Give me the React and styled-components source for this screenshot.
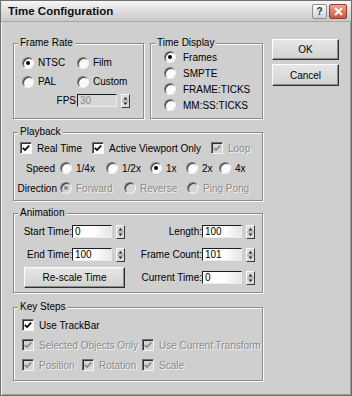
import React from 'react'
import styled, { createGlobalStyle } from 'styled-components';

const GlobalStyle = createGlobalStyle`
  html, body {
    margin: 0;
    padding: 0;
    background: #cfcfcf;
  }
  body {
    font-family: "Liberation Sans", Arial, sans-serif;
    font-size: 10px;
    color: #000;
  }
  * {
    box-sizing: border-box;
  }
`

const Window = styled.div`
  width: 352px;
  height: 396px;
  background: #cfcfcf;
  border: 1px solid #6e6e6e;
  box-shadow: inset 1px 1px 0 #f4f4f4, inset -1px -1px 0 #9a9a9a;
  display: flex;
  flex-direction: column;
  overflow: hidden;
`

const TitleBar = styled.div`
  height: 21px;
  flex: none;
  display: flex;
  align-items: center;
  padding: 0 4px 0 7px;
  background: linear-gradient(#f6f6f6, #dcdcdc 55%, #c8c8c8);
  border-bottom: 1px solid #a8a8a8;
`

const Title = styled.div`
  font-size: 11.5px;
  font-weight: bold;
  color: #111;
`

const TitleButtons = styled.div`
  margin-left: auto;
  display: flex;
  gap: 2px;
`

const HelpButton = styled.div`
  width: 15px;
  height: 15px;
  border: 1px solid #8c909a;
  border-radius: 2px;
  background: linear-gradient(#fafbfd, #cdd1da);
  display: flex;
  align-items: center;
  justify-content: center;
  font-size: 10px;
  font-weight: bold;
  color: #333;
`

const CloseButton = styled.div`
  width: 18px;
  height: 15px;
  border: 1px solid #9b3a2c;
  border-radius: 2px;
  background: linear-gradient(#eea193, #cf5541);
  display: flex;
  align-items: center;
  justify-content: center;
`

const Body = styled.div`
  padding: 15px 0 0 12px;
  display: flex;
  flex-direction: column;
`

const TopRow = styled.div`
  display: flex;
  align-items: flex-start;
`

const Group = styled.fieldset`
  margin: ${p => p.$mt || 0}px ${p => p.$mr || 0}px 0 0;
  padding: 0;
  min-width: 0;
  width: ${p => p.$w}px;
  border: 1px solid #8a8a8a;
  box-shadow: 1px 1px 0 #fafafa, inset 1px 1px 0 #fafafa;
`

const Legend = styled.legend`
  margin-left: 4px;
  padding: 0 2px;
  line-height: 12px;
  background: #cfcfcf;
`

const FrameRateBody = styled.div`
  height: 69px;
  padding: 4px 0 0 8px;
  display: grid;
  grid-template-columns: 55px auto;
  grid-auto-rows: 19px;
  align-items: center;
`

const TimeDisplayBody = styled.div`
  height: 69px;
  padding: 0 0 0 13px;
  display: grid;
  grid-auto-rows: 16px;
  align-items: center;
`

const FieldLabel = styled.div`
  display: flex;
  justify-content: flex-end;
  white-space: nowrap;
  padding-right: ${p => p.$pr || 0}px;
`

const ButtonColumn = styled.div`
  margin: 2px 0 0 9px;
  display: flex;
  flex-direction: column;
  gap: 4px;
`

const Button = styled.button`
  font: inherit;
  color: #000;
  width: ${p => p.$w}px;
  height: ${p => p.$h}px;
  margin-left: ${p => p.$ml || 0}px;
  padding: 0;
  background: linear-gradient(#e6e6e6, #d2d2d2);
  border: 1px solid;
  border-color: #fdfdfd #303030 #303030 #fdfdfd;
  box-shadow: inset -1px -1px 0 #8c8c8c;
`

const PlaybackBody = styled.div`
  padding: 0 0 2px 6px;
`

const Row = styled.div`
  height: 20px;
  display: grid;
  grid-template-columns: ${p => p.$cols};
  align-items: center;
`

const Option = styled.label`
  display: flex;
  align-items: center;
  gap: ${p => p.$gap || 4}px;
  white-space: nowrap;
  color: ${p => p.$disabled ? '#8c8c8c' : '#000'};
  text-shadow: ${p => p.$disabled ? '1px 1px 0 #f4f4f4' : 'none'};
  grid-column: ${p => p.$span ? `span ${p.$span}` : 'auto'};
`

const RadioCircle = styled.span`
  width: 12px;
  height: 12px;
  flex: none;
  border-radius: 50%;
  background: ${p => p.$disabled ? '#d6d6d6' : '#fbfbfb'};
  border: 1px solid;
  border-color: #7a7a7a #f2f2f2 #f2f2f2 #7a7a7a;
  box-shadow: inset 1px 1px 0 #3a3a3a;
  display: flex;
  align-items: center;
  justify-content: center;
  &::after {
    content: '';
    display: ${p => p.$on ? 'block' : 'none'};
    width: 4px;
    height: 4px;
    border-radius: 50%;
    background: ${p => p.$disabled ? '#8a8a8a' : '#000'};
    text-shadow: none;
  }
`

const CheckBox = styled.span`
  width: 12px;
  height: 12px;
  flex: none;
  background: ${p => p.$disabled ? '#d6d6d6' : '#fbfbfb'};
  border: 1px solid;
  border-color: #6e6e6e #f4f4f4 #f4f4f4 #6e6e6e;
  box-shadow: inset 1px 1px 0 #303030;
  display: flex;
  align-items: center;
  justify-content: center;
`

const AnimationBody = styled.div`
  padding: 1px 0 3px 0;
  display: grid;
  grid-template-columns: 58px 54px 76px 54px;
  grid-auto-rows: 23px;
  align-items: center;
`

const SpinWrap = styled.div`
  display: flex;
  align-items: center;
  gap: 4px;
`

const Field = styled.div`
  width: 40px;
  height: 13px;
  line-height: 11px;
  padding-left: 2px;
  background: ${p => p.$disabled ? '#d8d8d8' : 'linear-gradient(90deg, #ffffff 55%, #e6e6e6)'};
  color: ${p => p.$disabled ? '#8c8c8c' : '#000'};
  border: 1px solid;
  border-color: #1c1c1c #ececec #ececec #1c1c1c;
`

const Spinner = styled.span`
  width: 9px;
  height: 14px;
  flex: none;
  background: #dadada;
  border: 1px solid;
  border-color: #fafafa #3a3a3a #3a3a3a #fafafa;
  display: flex;
`

const KeyStepsBody = styled.div`
  padding: 2px 0 5px 8px;
  display: grid;
  grid-template-columns: 60px 60px auto;
  grid-auto-rows: 20px;
  align-items: center;
`

function Radio({ label, on, disabled, gap }) {
  return (
    <Option $disabled={disabled} $gap={gap}>
      <RadioCircle $on={on} $disabled={disabled} />
      {label}
    </Option>
  );
}

function Check({ label, disabled, span }) {
  return (
    <Option $disabled={disabled} $gap={5} $span={span}>
      <CheckBox $disabled={disabled}>
        <svg width="8" height="8" viewBox="0 0 8 8">
          <path d="M0.8 3.8 L3 6 L7.2 1.6" fill="none" stroke={disabled ? '#8a8a8a' : '#000'} strokeWidth="1.7" />
        </svg>
      </CheckBox>
      {label}
    </Option>
  );
}

function SpinField({ value, disabled }) {
  return (
    <SpinWrap>
      <Field $disabled={disabled}>{value}</Field>
      <Spinner>
        <svg width="7" height="12" viewBox="0 0 7 12">
          <path d="M3.5 2 L5.5 4.5 L1.5 4.5 Z" fill="#222" />
          <line x1="0" y1="6" x2="7" y2="6" stroke="#9a9a9a" strokeWidth="1" />
          <path d="M1.5 7.5 L5.5 7.5 L3.5 10 Z" fill="#222" />
        </svg>
      </Spinner>
    </SpinWrap>
  );
}

export default function App() {
  return (
    <Window>
      <GlobalStyle />
      <TitleBar>
        <Title>Time Configuration</Title>
        <TitleButtons>
          <HelpButton>?</HelpButton>
          <CloseButton>
            <svg width="9" height="9" viewBox="0 0 9 9">
              <path d="M1 1 L8 8 M8 1 L1 8" stroke="#fff" strokeWidth="2" />
            </svg>
          </CloseButton>
        </TitleButtons>
      </TitleBar>
      <Body>
        <TopRow>
          <Group $w={131} $mr={6}>
            <Legend>Frame Rate</Legend>
            <FrameRateBody>
              <Radio label="NTSC" on />
              <Radio label="Film" />
              <Radio label="PAL" />
              <Radio label="Custom" />
              <FieldLabel $pr={1}>FPS</FieldLabel>
              <SpinField value="30" disabled />
            </FrameRateBody>
          </Group>
          <Group $w={113}>
            <Legend>Time Display</Legend>
            <TimeDisplayBody>
              <Radio label="Frames" on gap={7} />
              <Radio label="SMPTE" gap={7} />
              <Radio label="FRAME:TICKS" gap={7} />
              <Radio label="MM:SS:TICKS" gap={7} />
            </TimeDisplayBody>
          </Group>
          <ButtonColumn>
            <Button $w={67} $h={21}>OK</Button>
            <Button $w={67} $h={22}>Cancel</Button>
          </ButtonColumn>
        </TopRow>

        <Group $w={250} $mt={7}>
          <Legend>Playback</Legend>
          <PlaybackBody>
            <Row $cols="72px 119px auto">
              <Check label="Real Time" />
              <Check label="Active Viewport Only" />
              <Check label="Loop" disabled />
            </Row>
            <Row $cols="40px 46px 44px 36px 33px auto">
              <FieldLabel $pr={5}>Speed</FieldLabel>
              <Radio label="1/4x" />
              <Radio label="1/2x" />
              <Radio label="1x" on />
              <Radio label="2x" />
              <Radio label="4x" />
            </Row>
            <Row $cols="40px 64px 63px auto">
              <FieldLabel $pr={3}>Direction</FieldLabel>
              <Radio label="Forward" on disabled />
              <Radio label="Reverse" disabled />
              <Radio label="Ping Pong" disabled />
            </Row>
          </PlaybackBody>
        </Group>

        <Group $w={250} $mt={6}>
          <Legend>Animation</Legend>
          <AnimationBody>
            <FieldLabel>Start Time:</FieldLabel>
            <SpinField value="0" />
            <FieldLabel>Length:</FieldLabel>
            <SpinField value="100" />
            <FieldLabel>End Time:</FieldLabel>
            <SpinField value="100" />
            <FieldLabel>Frame Count:</FieldLabel>
            <SpinField value="101" />
            <Button $w={101} $h={21} $ml={10} style={{ gridColumn: 'span 2' }}>Re-scale Time</Button>
            <FieldLabel>Current Time:</FieldLabel>
            <SpinField value="0" />
          </AnimationBody>
        </Group>

        <Group $w={250} $mt={8}>
          <Legend>Key Steps</Legend>
          <KeyStepsBody>
            <Check label="Use TrackBar" span={3} />
            <Check label="Selected Objects Only" disabled span={2} />
            <Check label="Use Current Transform" disabled />
            <Check label="Position" disabled />
            <Check label="Rotation" disabled />
            <Check label="Scale" disabled />
          </KeyStepsBody>
        </Group>
      </Body>
    </Window>
  );
}
